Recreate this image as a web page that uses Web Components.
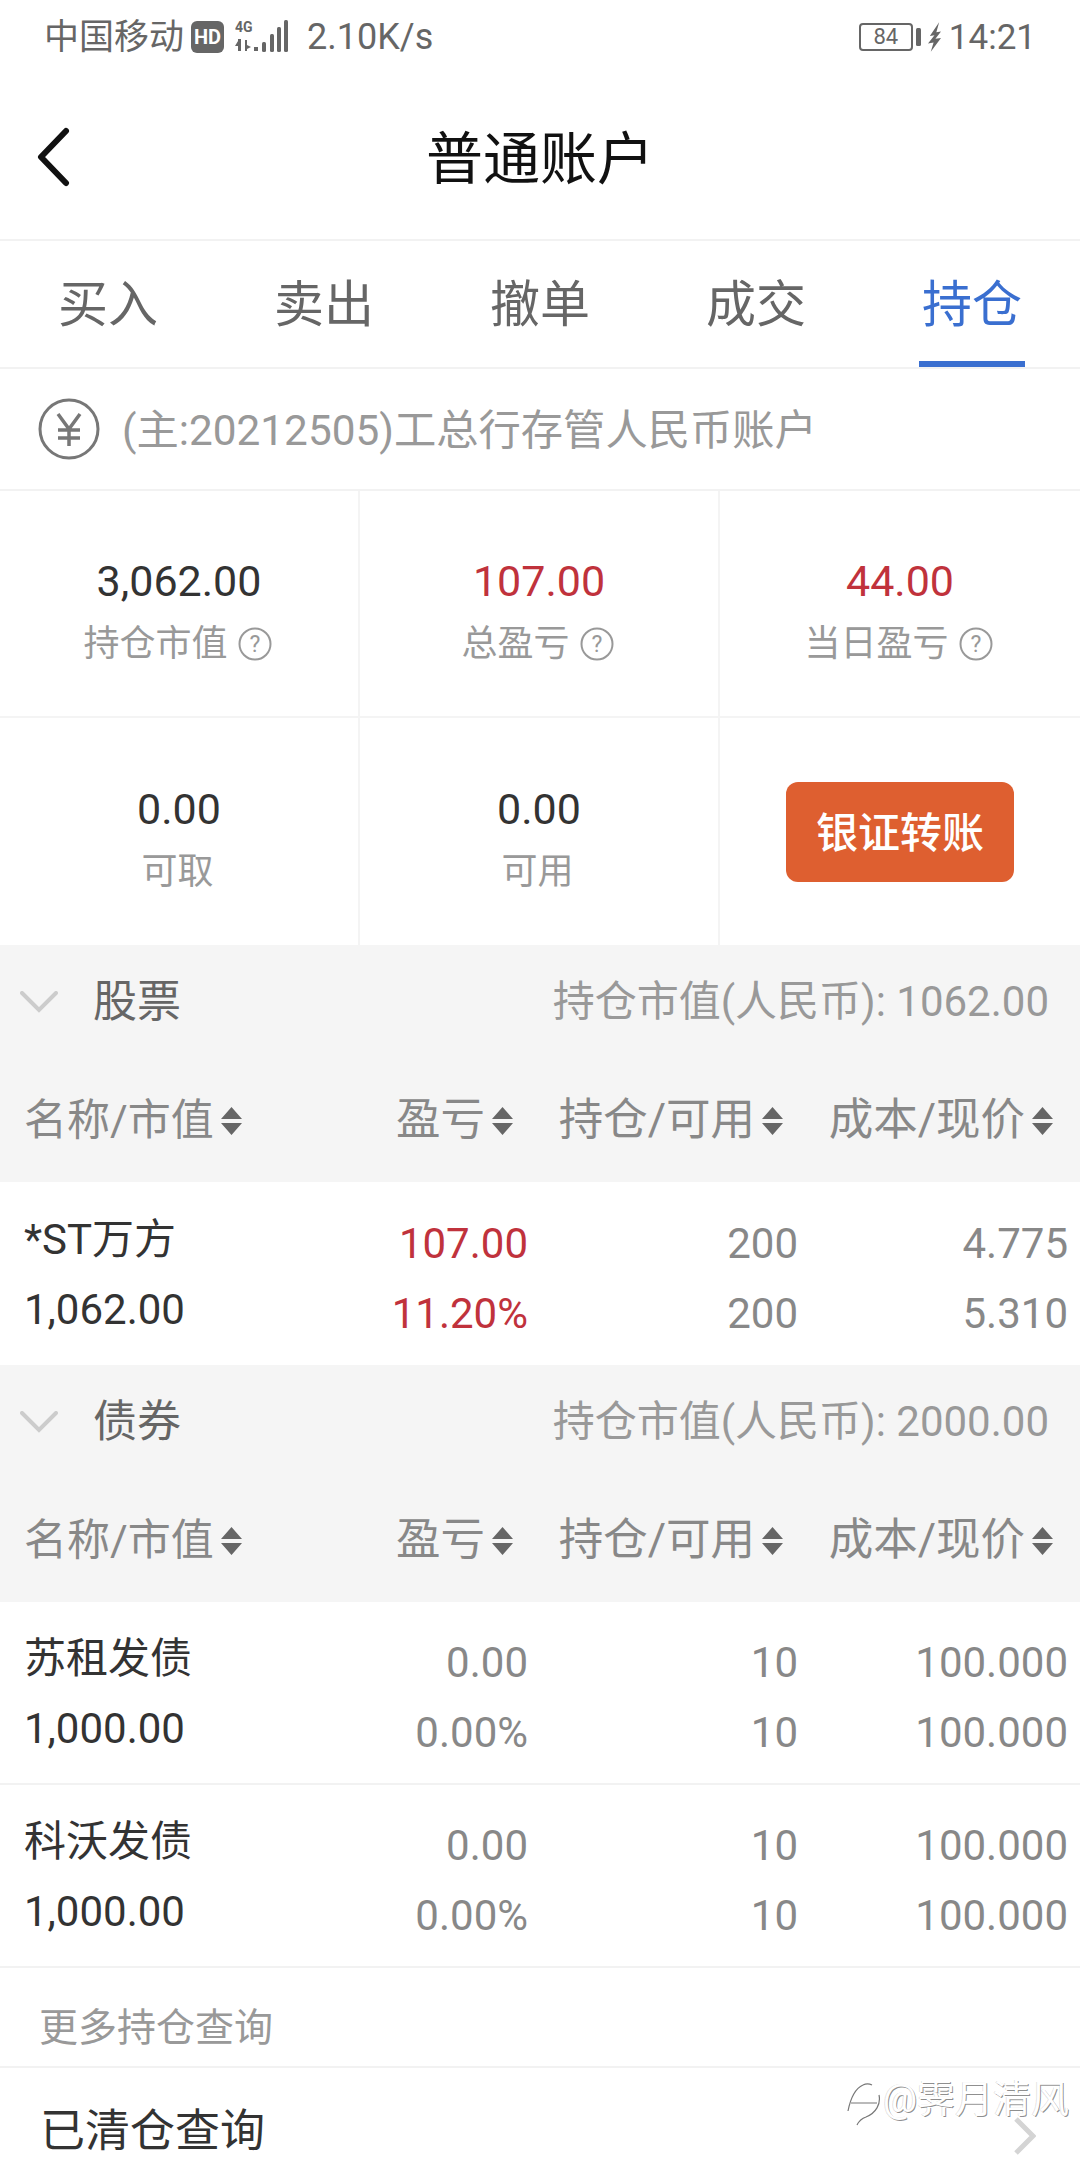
<!DOCTYPE html>
<html lang="zh-CN">
<head>
<meta charset="utf-8">
<title>普通账户</title>
<style>
    html, body{
        margin: 0;
        background: #fff;
    }
    body{
        width: 1080px;
        height: 2160px;
        overflow: hidden;
        position: relative;
        font-family: Roboto, "Noto Sans CJK SC", sans-serif;
    }
</style>
</head>
<body>
<status-bar></status-bar>
<nav-bar>普通账户</nav-bar>
<tab-bar data-tabs="买入,卖出,撤单,成交,持仓" data-active="4"></tab-bar>
<account-row>(主:20212505)工总行存管人民币账户</account-row>
<stat-grid>
    <stat-cell data-value="3,062.00" data-label="持仓市值" data-help></stat-cell>
    <stat-cell data-value="107.00" data-label="总盈亏" data-help data-up></stat-cell>
    <stat-cell data-value="44.00" data-label="当日盈亏" data-help data-up></stat-cell>
    <stat-cell data-value="0.00" data-label="可取"></stat-cell>
    <stat-cell data-value="0.00" data-label="可用"></stat-cell>
    <transfer-button>银证转账</transfer-button>
</stat-grid>
<section-head data-title="股票" data-total="1062.00"></section-head>
<holding-row data-name="*ST万方" data-value="1,062.00" data-pl="107.00" data-rate="11.20%" data-hold="200" data-free="200" data-cost="4.775" data-price="5.310" data-up></holding-row>
<section-head data-title="债券" data-total="2000.00"></section-head>
<holding-row data-name="苏租发债" data-value="1,000.00" data-pl="0.00" data-rate="0.00%" data-hold="10" data-free="10" data-cost="100.000" data-price="100.000"></holding-row>
<holding-row data-name="科沃发债" data-value="1,000.00" data-pl="0.00" data-rate="0.00%" data-hold="10" data-free="10" data-cost="100.000" data-price="100.000" data-line></holding-row>
<more-head>更多持仓查询</more-head>
<link-row>已清仓查询</link-row>
<water-mark>@霁月清风</water-mark>

<script>
const fonts = 'Roboto, "Noto Sans CJK SC", sans-serif';

class StatusBar extends HTMLElement{
    constructor(){
        super();
        this.attachShadow({mode: 'open'});
        this.shadowRoot.innerHTML = `
            <style>
                :host{
                    display: flex;
                    align-items: center;
                    height: 74px;
                    padding: 0 44px;
                    color: #666;
                    font: 35px/1 ${fonts};
                }
                .hd{
                    width: 33px;
                    height: 32px;
                    margin-left: 7px;
                    border-radius: 6px;
                    background: #666;
                    color: #fff;
                    font: bold 20px/32px ${fonts};
                    text-align: center;
                }
                svg{
                    display: block;
                }
                .signal{
                    margin-left: 11px;
                }
                .speed{
                    margin-left: 18px;
                    font-size: 36px;
                }
                .right{
                    margin-left: auto;
                    display: flex;
                    align-items: center;
                }
                .battery{
                    width: 54px;
                    height: 28px;
                    box-sizing: border-box;
                    border: 2px solid #666;
                    border-radius: 4px;
                    font: 22px/24px ${fonts};
                    text-align: center;
                }
                .time{
                    margin-left: 8px;
                    font-size: 35px;
                }
            </style>
            <span>中国移动</span>
            <span class="hd">HD</span>
            <svg class="signal" width="54" height="36" viewBox="0 0 54 36" fill="#666">
                <text x="0" y="13" font-family="Roboto" font-weight="bold" font-size="14">4G</text>
                <path d="M3 20h3v12H3zM0 27l3-5v5zM10 21h2v11h-2zM12 26l4 2-4 2zM19 28h4v4h-4z"/>
                <rect x="27" y="23" width="4" height="10" rx="1.5"/>
                <rect x="35" y="15" width="4" height="18" rx="1.5"/>
                <rect x="42" y="8" width="4" height="25" rx="1.5"/>
                <rect x="49" y="1" width="4" height="32" rx="1.5"/>
            </svg>
            <span class="speed">2.10K/s</span>
            <span class="right">
                <span class="battery">84</span>
                <svg width="5" height="18" style="margin-left:3px"><rect width="5" height="18" rx="1.5" fill="#666"/></svg>
                <svg width="13" height="32" viewBox="0 0 14 32" style="margin-left:7px" fill="#666">
                    <path d="M12 0L2 15l5-1-7 9 6-1-3 10 11-15-6 1 6-8-5 1z"/>
                </svg>
                <span class="time">14:21</span>
            </span>
        `;
    }
}
customElements.define('status-bar', StatusBar);

class NavBar extends HTMLElement{
    constructor(){
        super();
        this.attachShadow({mode: 'open'});
        this.shadowRoot.innerHTML = `
            <style>
                :host{
                    display: flex;
                    align-items: center;
                    justify-content: center;
                    position: relative;
                    height: 167px;
                    box-sizing: border-box;
                    padding-top: 5px;
                    border-bottom: 2px solid #f2f2f2;
                    color: #111;
                    font: 57px/1 ${fonts};
                }
                svg{
                    position: absolute;
                    left: 37px;
                    top: 53px;
                }
            </style>
            <svg width="33" height="60" viewBox="0 0 33 60" fill="none" stroke="#111" stroke-width="6" stroke-linecap="round" stroke-linejoin="round">
                <path d="M29 4L4 30l25 26"/>
            </svg>
            <slot></slot>
        `;
    }
}
customElements.define('nav-bar', NavBar);

class TabBar extends HTMLElement{
    constructor(){
        super();
        this.attachShadow({mode: 'open'});
    }
    connectedCallback(){
        let tabs = this.dataset.tabs.split(',');
        let html = '';
        for(let i = 0; i < tabs.length; i++){
            html += `<div class="tab ${i == this.dataset.active ? 'on' : ''}"><span>${tabs[i]}</span></div>`;
        }
        this.shadowRoot.innerHTML = `
            <style>
                :host{
                    display: flex;
                    height: 128px;
                    box-sizing: border-box;
                    border-bottom: 2px solid #f2f2f2;
                    color: #666;
                    font: 50px/1 ${fonts};
                }
                .tab{
                    flex: 1;
                    display: flex;
                    justify-content: center;
                }
                .tab span{
                    display: flex;
                    align-items: center;
                    padding: 2px 3px 0;
                    box-sizing: border-box;
                    height: 126px;
                }
                .on{
                    color: #3a6fd0;
                }
                .on span{
                    border-bottom: 6px solid #3a6fd0;
                    padding-top: 8px;
                }
            </style>
            ${html}
        `;
    }
}
customElements.define('tab-bar', TabBar);

class AccountRow extends HTMLElement{
    constructor(){
        super();
        this.attachShadow({mode: 'open'});
        this.shadowRoot.innerHTML = `
            <style>
                :host{
                    display: flex;
                    align-items: center;
                    height: 122px;
                    box-sizing: border-box;
                    padding-left: 38px;
                    border-bottom: 2px solid #f2f2f2;
                    color: #999;
                    font: 42.3px/1 ${fonts};
                }
                svg{
                    margin-right: 22px;
                }
                span{
                    padding-top: 5px;
                }
            </style>
            <svg width="62" height="62" viewBox="0 0 62 62" fill="none" stroke="#777" stroke-width="3">
                <circle cx="31" cy="31" r="29"/>
                <path d="M20 16l11 15 11-15M31 31v17M20 32h22M20 40h22" stroke-width="3.5"/>
            </svg>
            <span><slot></slot></span>
        `;
    }
}
customElements.define('account-row', AccountRow);

class StatGrid extends HTMLElement{
    constructor(){
        super();
        this.attachShadow({mode: 'open'});
        this.shadowRoot.innerHTML = `
            <style>
                :host{
                    display: grid;
                    grid-template-columns: 360px 360px 360px;
                    grid-template-rows: 227px 227px;
                    height: 454px;
                }
            </style>
            <slot></slot>
        `;
    }
}
customElements.define('stat-grid', StatGrid);

class StatCell extends HTMLElement{
    constructor(){
        super();
        this.attachShadow({mode: 'open'});
    }
    connectedCallback(){
        let help = '';
        if(this.hasAttribute('data-help')){
            help = `
                <svg width="34" height="34" viewBox="0 0 34 34" fill="none" stroke="#999" stroke-width="2">
                    <circle cx="17" cy="17" r="15.5"/>
                    <text x="17" y="25" fill="#999" stroke="none" font-family="Roboto" font-size="23" text-anchor="middle">?</text>
                </svg>`;
        }
        this.shadowRoot.innerHTML = `
            <style>
                :host{
                    display: flex;
                    flex-direction: column;
                    align-items: center;
                    justify-content: center;
                    box-sizing: border-box;
                    border-right: 2px solid #f4f4f4;
                    border-bottom: 2px solid #f4f4f4;
                    padding-top: 14px;
                }
                :host(:nth-child(3)){
                    border-right: none;
                }
                :host(:nth-child(n+4)){
                    border-bottom: none;
                }
                .value{
                    color: #333;
                    font: 43px/1 ${fonts};
                }
                :host([data-up]) .value{
                    color: #c0323c;
                }
                .label{
                    display: flex;
                    align-items: center;
                    gap: 10px;
                    margin-top: 23px;
                    margin-right: 3px;
                    color: #999;
                    font: 36px/1 ${fonts};
                }
            </style>
            <div class="value">${this.dataset.value}</div>
            <div class="label"><span>${this.dataset.label}</span>${help}</div>
        `;
    }
}
customElements.define('stat-cell', StatCell);

class TransferButton extends HTMLElement{
    constructor(){
        super();
        this.attachShadow({mode: 'open'});
        this.shadowRoot.innerHTML = `
            <style>
                :host{
                    display: flex;
                    align-items: center;
                    justify-content: center;
                }
                div{
                    width: 228px;
                    height: 100px;
                    border-radius: 12px;
                    background: #de5f30;
                    color: #fff;
                    font: 500 42px/104px ${fonts};
                    text-align: center;
                }
            </style>
            <div><slot></slot></div>
        `;
    }
}
customElements.define('transfer-button', TransferButton);

const headColumns = ['名称/市值', '盈亏', '持仓/可用', '成本/现价'];

class SectionHead extends HTMLElement{
    constructor(){
        super();
        this.attachShadow({mode: 'open'});
    }
    connectedCallback(){
        let cols = '';
        for(let i = 0; i < headColumns.length; i++){
            cols += `
                <div class="col">
                    <span>${headColumns[i]}</span>
                    <svg width="21" height="28" viewBox="0 0 21 28" fill="#666"><path d="M10.5 0L21 12H0zM0 16h21L10.5 28z"/></svg>
                </div>`;
        }
        this.shadowRoot.innerHTML = `
            <style>
                :host{
                    display: block;
                    height: 237px;
                    background: #f5f5f5;
                }
                .top{
                    display: flex;
                    align-items: center;
                    height: 114px;
                    padding: 0 31px 0 20px;
                }
                .top svg{
                    margin-right: 35px;
                }
                .title{
                    color: #666;
                    font: 44px/1 ${fonts};
                }
                .total{
                    margin-left: auto;
                    color: #999;
                    font: 42px/1 ${fonts};
                }
                .cols{
                    display: grid;
                    grid-template-columns: 219px 270px 270px 270px;
                    height: 123px;
                    padding-left: 24px;
                    color: #888;
                    font: 44.5px/1 ${fonts};
                }
                .col{
                    display: flex;
                    align-items: center;
                    justify-content: flex-end;
                    gap: 7px;
                }
                .col:first-child{
                    justify-content: flex-start;
                    white-space: nowrap;
                    font-size: 43px;
                }
            </style>
            <div class="top">
                <svg width="38" height="22" viewBox="0 0 38 22" fill="none" stroke="#ccc" stroke-width="4" stroke-linecap="round"><path d="M2 2l17 17L36 2"/></svg>
                <span class="title">${this.dataset.title}</span>
                <span class="total">持仓市值(人民币): ${this.dataset.total}</span>
            </div>
            <div class="cols">${cols}</div>
        `;
    }
}
customElements.define('section-head', SectionHead);

class HoldingRow extends HTMLElement{
    constructor(){
        super();
        this.attachShadow({mode: 'open'});
    }
    connectedCallback(){
        let d = this.dataset;
        this.shadowRoot.innerHTML = `
            <style>
                :host{
                    display: grid;
                    grid-template-columns: 234px 270px 270px 270px;
                    align-items: center;
                    height: 183px;
                    box-sizing: border-box;
                    padding-left: 24px;
                    color: #888;
                    font: 42px/70px ${fonts};
                    border-bottom: 2px solid #f2f2f2;
                }
                :host([data-up]){
                    border-bottom: none;
                }
                .name{
                    color: #333;
                    margin-top: 3px;
                    white-space: nowrap;
                }
                .num{
                    margin-top: 11px;
                    text-align: right;
                }
                :host([data-up]) .pl{
                    color: #c0323c;
                }
            </style>
            <div class="name">${d.name}<br>${d.value}</div>
            <div class="num pl">${d.pl}<br>${d.rate}</div>
            <div class="num">${d.hold}<br>${d.free}</div>
            <div class="num">${d.cost}<br>${d.price}</div>
        `;
    }
}
customElements.define('holding-row', HoldingRow);

class MoreHead extends HTMLElement{
    constructor(){
        super();
        this.attachShadow({mode: 'open'});
        this.shadowRoot.innerHTML = `
            <style>
                :host{
                    display: flex;
                    align-items: center;
                    height: 100px;
                    box-sizing: border-box;
                    padding: 22px 0 0 39px;
                    border-bottom: 2px solid #f2f2f2;
                    color: #999;
                    font: 39px/1 ${fonts};
                }
            </style>
            <slot></slot>
        `;
    }
}
customElements.define('more-head', MoreHead);

class LinkRow extends HTMLElement{
    constructor(){
        super();
        this.attachShadow({mode: 'open'});
        this.shadowRoot.innerHTML = `
            <style>
                :host{
                    display: flex;
                    align-items: center;
                    height: 70px;
                    padding: 28px 44px 0 40px;
                    color: #333;
                    font: 45px/1 ${fonts};
                }
                svg{
                    margin-left: auto;
                    margin-top: 10px;
                }
            </style>
            <slot></slot>
            <svg width="22" height="38" viewBox="0 0 22 38" fill="none" stroke="#d4d4d4" stroke-width="5"><path d="M2 2l17 17L2 36"/></svg>
        `;
    }
}
customElements.define('link-row', LinkRow);

// watermark sits over the bottom row of the screenshot
class WaterMark extends HTMLElement{
    constructor(){
        super();
        this.attachShadow({mode: 'open'});
        this.shadowRoot.innerHTML = `
            <style>
                :host{
                    position: absolute;
                    left: 847px;
                    top: 2072px;
                    display: flex;
                    align-items: center;
                    color: #fff;
                    font: 38px/50px ${fonts};
                    text-shadow: 1px 1px 0 rgba(0,0,0,.45), -1px 0 0 rgba(0,0,0,.12);
                }
                svg{
                    margin-right: 2px;
                    margin-top: 8px;
                }
            </style>
            <svg width="34" height="46" viewBox="0 0 34 46" fill="none" stroke="#777" stroke-width="1.2">
                <path d="M1 31C3 21 7 9 16 5c4-2 7-1 9 0M4 23h26M32 15c2 9-3 18-13 22-3 1-7 4-9 8"/>
            </svg>
            <slot></slot>
        `;
    }
}
customElements.define('water-mark', WaterMark);
</script>
</body>
</html>
